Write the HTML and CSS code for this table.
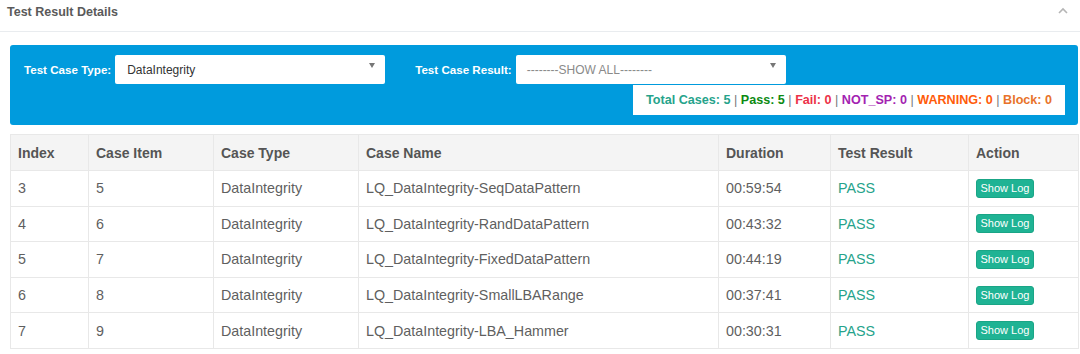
FILE: index.html
```html
<!DOCTYPE html>
<html>
<head>
<meta charset="utf-8">
<link rel="stylesheet" href="styles.css">
</head>
<body>
<div class="panel">
  <div class="panel-title">
    <h2>Test Result Details</h2>
    <svg class="chev" width="10" height="7" viewBox="0 0 10 7"><path d="M1 6 L5 2 L9 6" fill="none" stroke="#b5b5b5" stroke-width="1.6"/></svg>
  </div>
  <div class="filter">
    <div class="filter-row">
      <label class="flabel">Test Case Type:</label>
      <div class="select"><span class="val">DataIntegrity</span><span class="arrow"></span></div>
      <label class="flabel second">Test Case Result:</label>
      <div class="select"><span class="val ph">--------SHOW ALL--------</span><span class="arrow"></span></div>
    </div>
    <div class="stats"><p class="stats-line"><span class="s-total">Total Cases: 5</span> <span class="sep">|</span> <span class="s-pass">Pass: 5</span> <span class="sep">|</span> <span class="s-fail">Fail: 0</span> <span class="sep">|</span> <span class="s-nsp">NOT_SP: 0</span> <span class="sep">|</span> <span class="s-warn">WARNING: 0</span> <span class="sep">|</span> <span class="s-block">Block: 0</span></p></div>
  </div>
  <table class="results">
    <colgroup>
      <col class="c1"><col class="c2"><col class="c3"><col class="c4"><col class="c5"><col class="c6"><col class="c7">
    </colgroup>
    <thead>
      <tr><th>Index</th><th>Case Item</th><th>Case Type</th><th>Case Name</th><th>Duration</th><th>Test Result</th><th>Action</th></tr>
    </thead>
    <tbody>
      <tr><td>3</td><td>5</td><td>DataIntegrity</td><td>LQ_DataIntegrity-SeqDataPattern</td><td>00:59:54</td><td class="pass">PASS</td><td><button class="btn">Show Log</button></td></tr>
      <tr><td>4</td><td>6</td><td>DataIntegrity</td><td>LQ_DataIntegrity-RandDataPattern</td><td>00:43:32</td><td class="pass">PASS</td><td><button class="btn">Show Log</button></td></tr>
      <tr><td>5</td><td>7</td><td>DataIntegrity</td><td>LQ_DataIntegrity-FixedDataPattern</td><td>00:44:19</td><td class="pass">PASS</td><td><button class="btn">Show Log</button></td></tr>
      <tr><td>6</td><td>8</td><td>DataIntegrity</td><td>LQ_DataIntegrity-SmallLBARange</td><td>00:37:41</td><td class="pass">PASS</td><td><button class="btn">Show Log</button></td></tr>
      <tr><td>7</td><td>9</td><td>DataIntegrity</td><td>LQ_DataIntegrity-LBA_Hammer</td><td>00:30:31</td><td class="pass">PASS</td><td><button class="btn">Show Log</button></td></tr>
    </tbody>
  </table>
</div>
</body>
</html>
```
FILE: styles.css
```css
html, body {
  margin: 0;
  padding: 0;
  background: #fff;
}
body {
  font-family: "Liberation Sans", Arial, sans-serif;
  color: #5f5f5f;
}
.panel {
  width: 1080px;
}
.panel-title {
  height: 31px;
  border-bottom: 1px solid #e9ecef;
  display: flex;
  align-items: flex-start;
  justify-content: space-between;
  padding: 0 12px 0 7px;
}
.panel-title h2 {
  margin: 5px 0 0;
  font-size: 12.5px;
  font-weight: bold;
  color: #5a5a5a;
  line-height: 14px;
}
.chev {
  margin-top: 7px;
}
.filter {
  margin: 13px 2px 0 10px;
  background: #009bdd;
  border-radius: 3px;
  padding: 10px 13px 10px 14px;
  display: flex;
  flex-direction: column;
  height: 60px;
}
.filter-row {
  display: flex;
  align-items: center;
  height: 29px;
}
.flabel {
  color: #fff;
  font-weight: bold;
  font-size: 11.6px;
  margin-right: 4px;
}
.flabel.second {
  margin-left: 30px;
}
.select {
  width: 270px;
  height: 29px;
  background: #fff;
  border-radius: 2px;
  display: flex;
  align-items: center;
  justify-content: space-between;
  box-sizing: border-box;
  padding: 0 10px 0 12px;
  font-size: 12px;
  color: #333;
}
.select .ph {
  color: #8a8a8a;
  margin-left: -1px;
}
.arrow {
  width: 0;
  height: 0;
  border-left: 3.5px solid transparent;
  border-right: 3.5px solid transparent;
  border-top: 5px solid #777;
  margin-top: -8px;
}
.stats {
  align-self: flex-end;
  margin-top: 1px;
  background: #fff;
  height: 30px;
  width: 432px;
  box-sizing: border-box;
  padding: 0 0 0 13px;
  display: flex;
  align-items: center;
}
.stats-line {
  margin: 0;
  white-space: nowrap;
  font-size: 12.6px;
  font-weight: bold;
}
.sep { color: #777; font-weight: normal; }
.s-total { color: #26a38b; }
.s-pass { color: #0c8a12; }
.s-fail { color: #ec3148; }
.s-nsp { color: #a323b1; }
.s-warn { color: #ff5c0a; }
.s-block { color: #e8732a; }
.results {
  margin: 9px 0 0 10px;
  width: 1068px;
  border-collapse: collapse;
  table-layout: fixed;
  font-size: 14px;
}
.c1 { width: 78px; }
.c2 { width: 125px; }
.c3 { width: 145px; }
.c4 { width: 360px; }
.c5 { width: 112px; }
.c6 { width: 138px; }
.c7 { width: 110px; }
.results th, .results td {
  border: 1px solid #e8e8e8;
  text-align: left;
  padding: 0 7px;
}
.results th {
  height: 35px;
  background: #f4f4f4;
  font-weight: bold;
  color: #555;
  line-height: 14px;
}
.results td {
  height: 34.6px;
  color: #5f5f5f;
  font-size: 14.3px;
  line-height: 16px;
}
.results td.pass {
  color: #26a38b;
}
.btn {
  background: #1fb394;
  color: #fff;
  border: 1px solid #1aa586;
  border-radius: 3px;
  font-family: "Liberation Sans", Arial, sans-serif;
  font-size: 11px;
  height: 19px;
  width: 58px;
  padding: 0;
  line-height: 17px;
}
```
